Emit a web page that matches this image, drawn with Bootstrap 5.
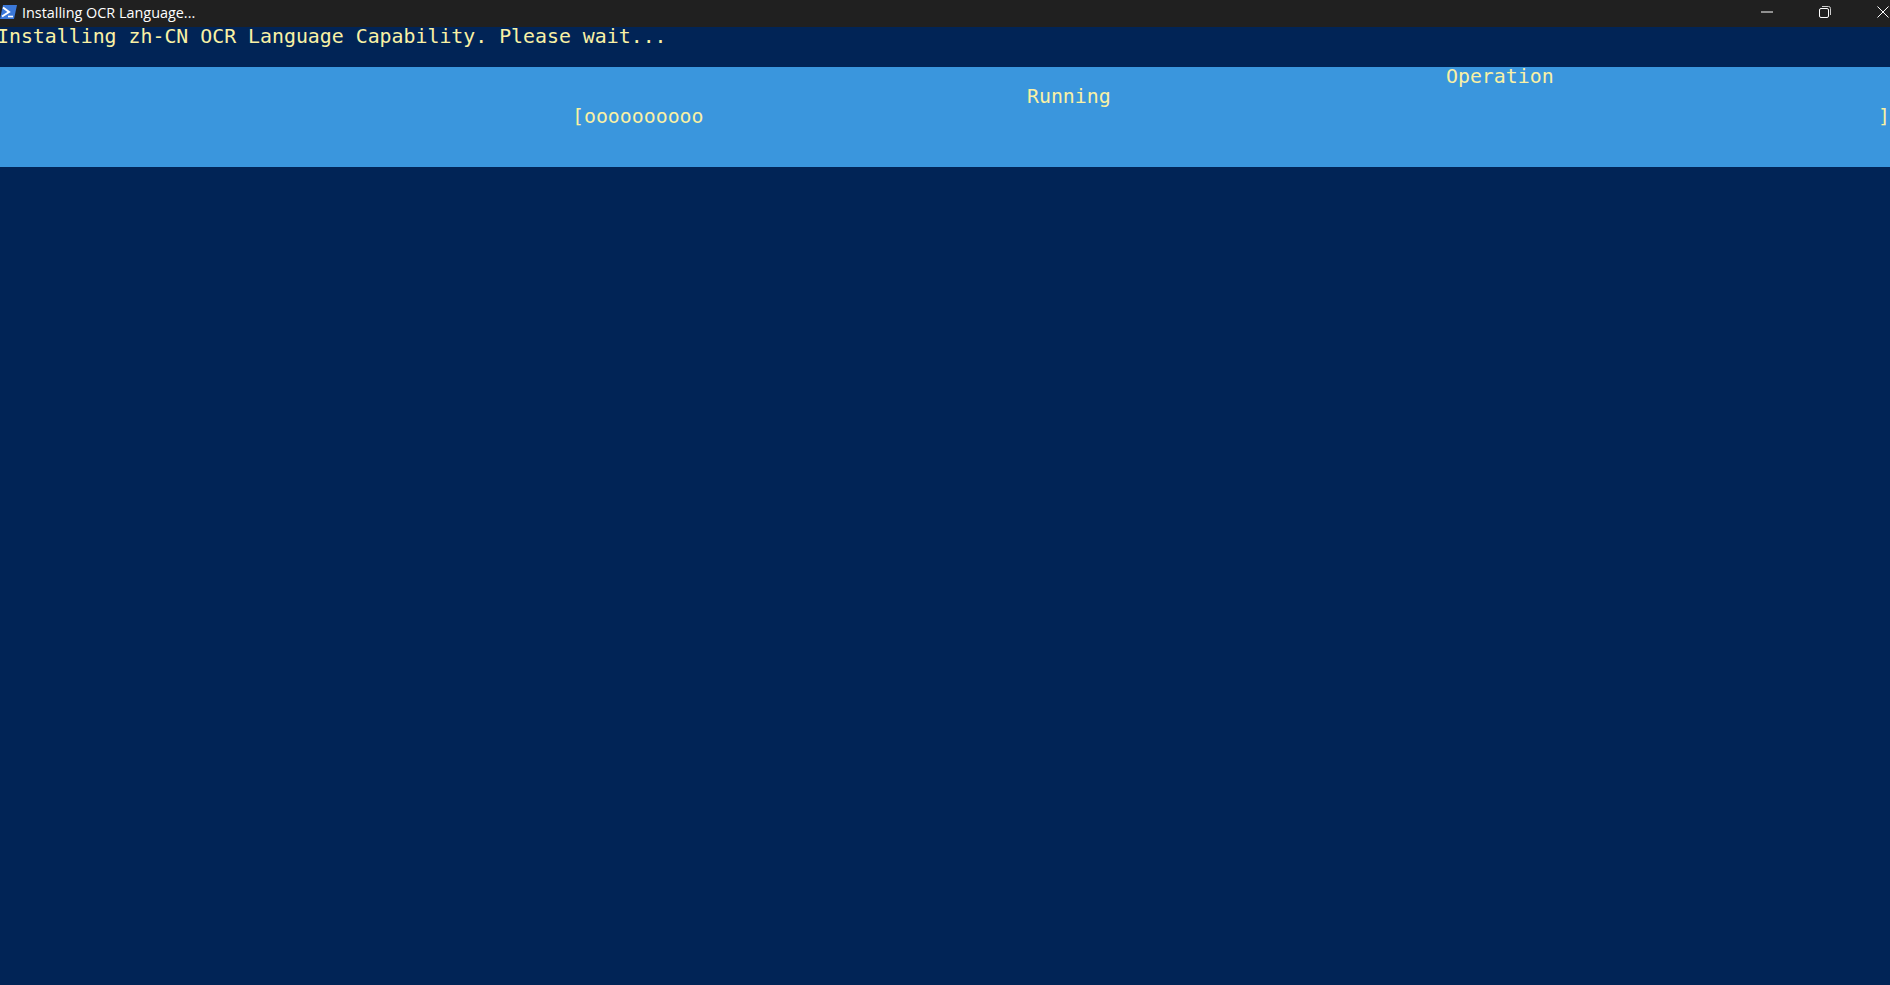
<!DOCTYPE html>
<html lang="en">
<head>
<meta charset="utf-8">
<title>Installing OCR Language...</title>
<link rel="stylesheet" href="https://cdn.jsdelivr.net/npm/bootstrap@5.3.0/dist/css/bootstrap.min.css">
<style>
html,body{height:100%;}
body{background:#012456;overflow:hidden;}
.term-bar{height:27px;background:#202020;color:#fff;font-family:"Open Sans","Noto Sans",sans-serif;font-size:14.4px;padding-bottom:2px;}
.term-title{margin-left:5px;}
.term-ctl{gap:46px;padding-right:1px;padding-bottom:2px;}
.term-ctl svg{display:block;}
.term-body{font-family:"DejaVu Sans Mono","Liberation Mono",monospace;font-size:19.87px;line-height:20px;color:#f9f1a5;}
.term-line{height:20px;white-space:pre;}
.term-first{height:40px;margin-left:-3px;}
.term-band{background:#3a96dd;height:100px;}
.term-op{padding-left:1446px;}
.term-run{padding-left:1027px;}
.term-prog{padding-left:572px;}
.term-end{margin-left:auto;}
</style>
</head>
<body>
<div class="term-bar d-flex align-items-center justify-content-between">
  <div class="d-flex align-items-center">
    <svg width="17" height="16" viewBox="0 0 17 16"><path d="M3 1H17L14 15H0Z" fill="#3b78d8"/><path d="M3 3.500L9 8L2 12.500" fill="none" stroke="#fff" stroke-width="2"/><path d="M8 12.500H13" stroke="#fff" stroke-width="1.600"/></svg>
    <span class="term-title">Installing OCR Language...</span>
  </div>
  <div class="term-ctl d-flex align-items-center">
    <svg width="12" height="12" viewBox="0 0 12 12"><path d="M0 6H12" stroke="#fff" stroke-width="1"/></svg>
    <svg width="12" height="12" viewBox="0 0 12 12"><rect x=".5" y="2.500" width="9" height="9" rx="1.500" fill="none" stroke="#fff"/><path d="M3 .5H9.500A2 2 0 0 1 11.500 2.500V9" fill="none" stroke="#ccc"/></svg>
    <svg width="12" height="12" viewBox="0 0 12 12"><path d="M.5 .5L11.500 11.500M11.500 .5L.5 11.500" stroke="#fff" stroke-width="1"/></svg>
  </div>
</div>
<div class="term-body">
  <div class="term-line term-first">Installing zh-CN OCR Language Capability. Please wait...</div>
  <div class="term-band">
    <div class="term-line term-op">Operation</div>
    <div class="term-line term-run">Running</div>
    <div class="term-line term-prog d-flex"><span>[oooooooooo</span><span class="term-end">]</span></div>
  </div>
</div>
<script src="https://cdn.jsdelivr.net/npm/bootstrap@5.3.0/dist/js/bootstrap.bundle.min.js"></script>
</body>
</html>
